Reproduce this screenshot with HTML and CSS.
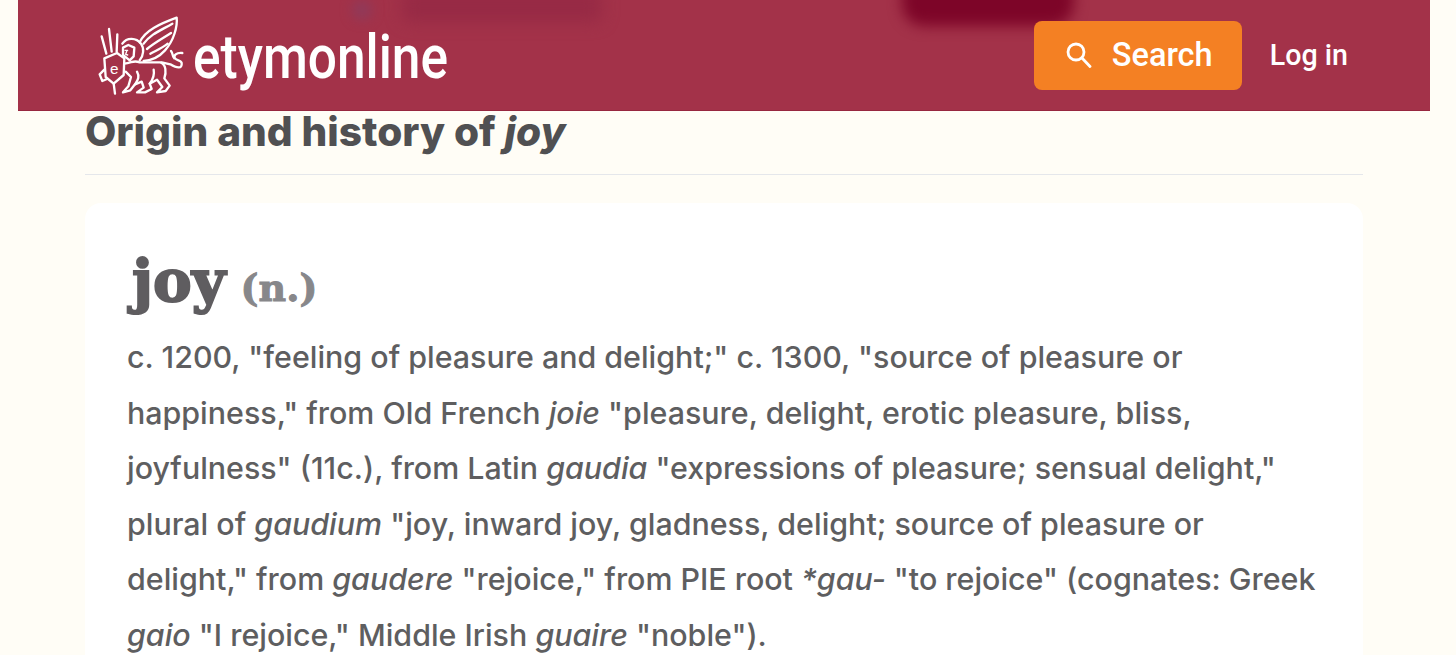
FILE: index.html
```html
<!DOCTYPE html>
<html lang="en">
<head>
    <meta charset="UTF-8">
    <meta name="viewport" content="width=device-width, initial-scale=1.0">
    <title>joy | Origin and meaning of joy by etymonline</title>
    <link rel="stylesheet" href="styles.css">
</head>
<body>

<header class="site-header">
    <!-- page content scrolling under the translucent bar -->
    <span class="blur-dot"></span>
    <span class="blur-band"></span>
    <span class="blur-pill"></span>

    <a class="logo" href="#">
        <svg class="logo-mark" viewBox="0 0 285 258" fill="none" stroke="#fff" stroke-width="7" stroke-linejoin="round" stroke-linecap="round">
            <!-- rays -->
            <path d="M20 70 L34 122 M42 48 L50 116 M67 64 L65 116"/>
            <!-- shield -->
            <path d="M28 136 L66 120 L88 136 L86 186 L56 212 L32 192 Z"/>
            <text class="logo-e" x="45" y="182">e</text>
            <path d="M56 212 L60 242 M28 170 L14 184 L22 204 L36 198"/>
            <!-- head and mane -->
            <path d="M82 92 C96 72 124 74 138 92 C148 106 146 128 134 142"/>
            <path d="M84 104 L100 96 L118 104 L116 130 L104 142 L94 134 L84 126 Z"/>
            <path d="M90 112 L98 112 M96 112 L92 124 L98 126" stroke-width="4"/>
            <!-- wings -->
            <path d="M134 88 C150 52 196 32 245 14 C248 40 236 84 210 112 C194 130 170 142 146 144"/>
            <path d="M146 92 C168 62 198 52 232 32"/>
            <path d="M156 108 C180 88 204 76 228 60"/>
            <path d="M166 122 C184 112 200 106 218 92"/>
            <!-- body and legs -->
            <path d="M88 152 C110 150 118 140 132 148 L196 148 C214 154 214 178 208 196 L224 218 L212 234 L186 238 L202 222 L186 200 L164 212 L170 228 L150 238 L126 238 L146 224 L140 206 L120 214 L106 232 L84 238 L100 220 L108 192 L92 176"/>
            <path d="M164 212 C176 196 178 180 176 170"/>
            <path d="M126 176 C134 190 130 200 120 214"/>
            <!-- tail -->
            <path d="M200 148 L226 154 C246 166 262 168 260 150 C258 140 246 144 240 136 C234 128 244 118 262 120 M228 114 C236 124 230 128 238 136"/>
        </svg>
        <span class="logo-name">etymonline</span>
    </a>

    <nav class="header-nav">
        <button class="search-btn">
            <svg class="search-icon" viewBox="0 0 26 26" fill="none" stroke="#fff" stroke-width="2.8" stroke-linecap="round">
                <circle cx="10" cy="10" r="8"/>
                <path d="M16 16 L24 24.5"/>
            </svg>
            Search
        </button>
        <a class="login-link" href="#">Log in</a>
    </nav>
</header>

<main class="content">
    <h2 class="section-title">Origin and history of <em>joy</em></h2>

    <section class="word-card">
        <h3 class="word-title">joy <span class="word-pos">(n.)</span></h3>
        <p class="word-text">c. 1200, "feeling of pleasure and delight;" c. 1300, "source of pleasure or happiness," from Old French <em>joie</em> "pleasure, delight, erotic pleasure, bliss, joyfulness" (11c.), from Latin <em>gaudia</em> "expressions of pleasure; sensual delight," plural of <em>gaudium</em> "joy, inward joy, gladness, delight; source of pleasure or delight," from <em>gaudere</em> "rejoice," from PIE root <em>*gau-</em> "to rejoice" (cognates: Greek <em>gaio</em> "I rejoice," Middle Irish <em>guaire</em> "noble").</p>
    </section>
</main>

</body>
</html>
```

FILE: styles.css
```css
html, body {
    height: 655px;
    overflow: hidden;
}

body {
    font-family: 'Inter', sans-serif;
    background-color: #fffdf6;
    margin: 0;
    color: #5e5e60;
}

.site-header {
    position: relative;
    overflow: hidden;
    display: flex;
    justify-content: space-between;
    align-items: center;
    box-sizing: border-box;
    height: 111px;
    margin: 0 26px 0 18px;
    padding: 0 82px;
    background-color: #a33249;
    border-bottom: 1px solid #97273f;
}

.blur-dot {
    position: absolute;
    left: 334px;
    top: 0;
    width: 20px;
    height: 20px;
    border-radius: 50%;
    background-color: #8f3a5a;
    filter: blur(6px);
}

.blur-band {
    position: absolute;
    left: 384px;
    top: -10px;
    width: 200px;
    height: 32px;
    border-radius: 8px;
    background-color: #972a45;
    filter: blur(8px);
}

.blur-pill {
    position: absolute;
    left: 884px;
    top: -40px;
    width: 172px;
    height: 66px;
    border-radius: 22px;
    background-color: #7d0528;
    filter: blur(7px);
}

.logo {
    position: relative;
    display: flex;
    align-items: center;
    margin-top: 1px;
    color: #fff;
    text-decoration: none;
}

.logo-mark {
    width: 95px;
    height: 86px;
    margin-left: -5px;
}

.logo-e {
    font-family: 'Liberation Sans', sans-serif;
    font-size: 46px;
    fill: #fff;
    stroke: none;
}

.logo-name {
    font-family: 'Roboto', sans-serif;
    font-size: 62px;
    font-weight: 500;
    line-height: 1;
    margin: 2px 0 0 3px;
    transform: scaleX(0.83);
    transform-origin: left center;
}

.header-nav {
    position: relative;
    display: flex;
    align-items: center;
    gap: 28px;
}

.search-btn {
    display: flex;
    align-items: center;
    gap: 20px;
    width: 208px;
    height: 69px;
    padding: 0 0 0 32px;
    font-family: 'Roboto', sans-serif;
    font-size: 32.5px;
    font-weight: 500;
    color: #fff;
    background-color: #f48023;
    border: none;
    border-radius: 8px;
    cursor: pointer;
}

.search-icon {
    width: 26px;
    height: 26px;
}

.login-link {
    font-family: 'Roboto', sans-serif;
    font-size: 28.6px;
    font-weight: 500;
    color: #fff;
    text-decoration: none;
}

.content {
    width: 1278px;
    margin-left: 85px;
}

.section-title {
    margin: 0;
    padding-bottom: 21px;
    font-size: 40.6px;
    line-height: 42px;
    font-weight: 800;
    color: #505052;
    border-bottom: 1px solid #e5e7eb;
}

.word-card {
    box-sizing: border-box;
    margin-top: 28px;
    padding: 42px 42px 0;
    height: 600px;
    background-color: #fff;
    border-radius: 16px;
}

.word-title {
    margin: 0 0 6px 5px;
    font-family: 'DejaVu Serif', serif;
    font-size: 58px;
    line-height: 73px;
    font-weight: 700;
    color: #5f5d60;
    -webkit-text-stroke: 2px #5f5d60;
}

.word-pos {
    margin-left: -5px;
    font-size: 38px;
    color: #87878a;
    -webkit-text-stroke: 1px #87878a;
}

.word-text {
    margin: 0;
    font-size: 30.4px;
    font-weight: 550;
    line-height: 55.5px;
}
```
